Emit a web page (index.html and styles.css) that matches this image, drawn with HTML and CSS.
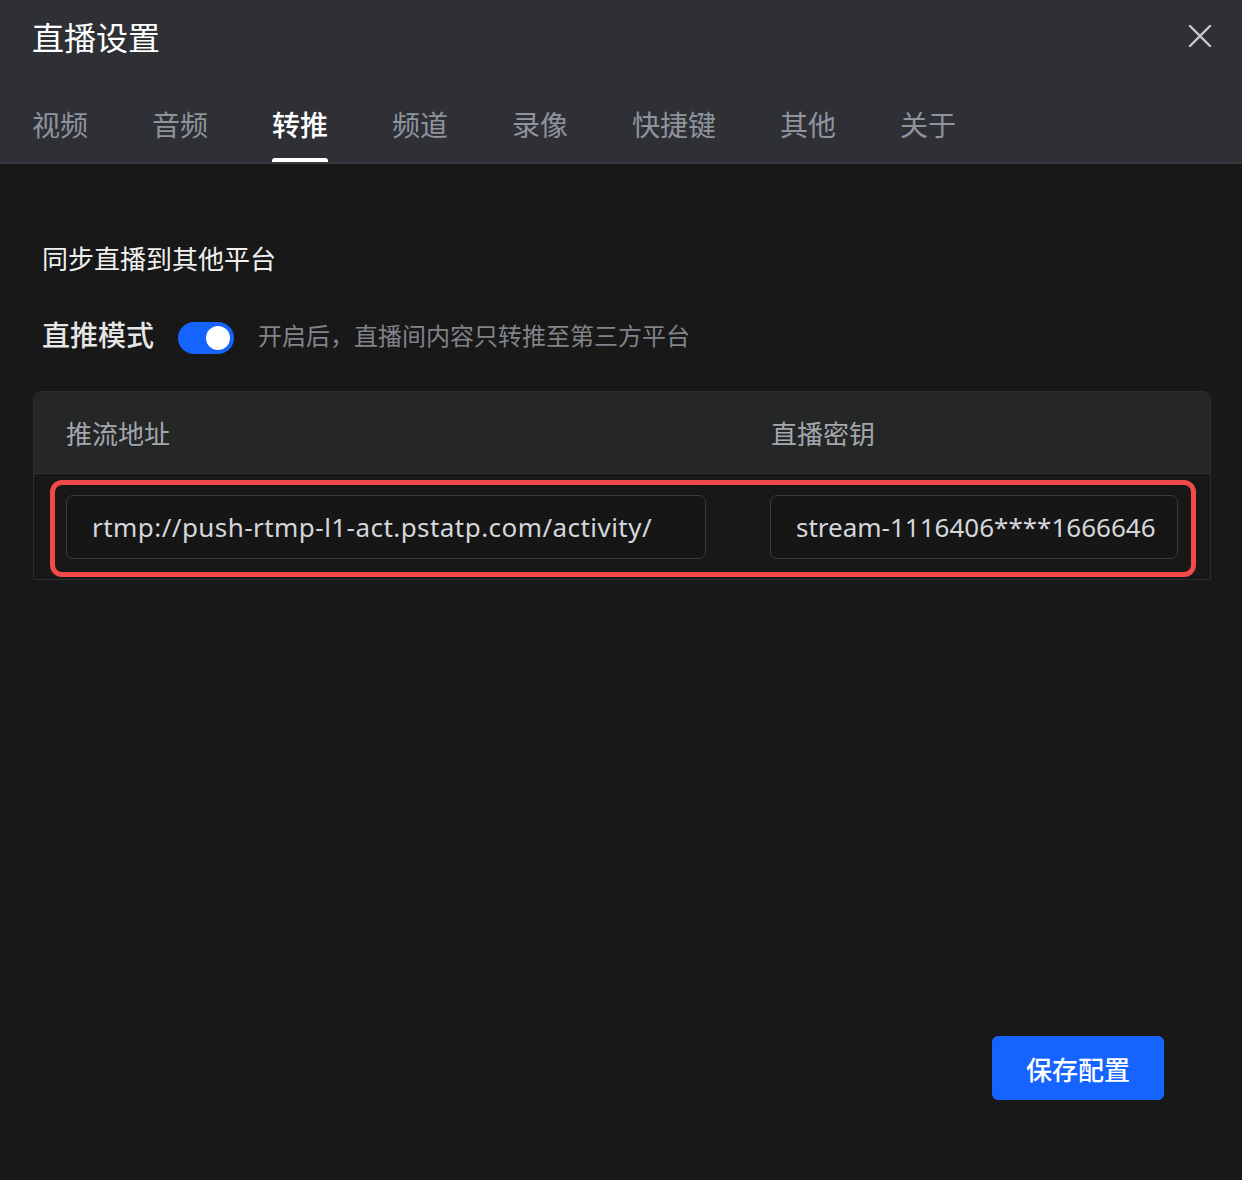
FILE: index.html
```html
<!DOCTYPE html>
<html lang="zh">
<head>
<meta charset="utf-8">
<link rel="stylesheet" href="styles.css">
</head>
<body>
<div class="dialog">
  <header class="header">
    <div class="title-row">
      <h1 class="title">直播设置</h1>
      <button class="close" aria-label="关闭">
        <svg width="24" height="24" viewBox="0 0 24 24"><path d="M2 2L22 22M22 2L2 22" stroke="#c9ccd2" stroke-width="2.4" stroke-linecap="round" fill="none"/></svg>
      </button>
    </div>
    <nav class="tabs">
      <span class="tab">视频</span>
      <span class="tab">音频</span>
      <span class="tab active">转推</span>
      <span class="tab">频道</span>
      <span class="tab">录像</span>
      <span class="tab">快捷键</span>
      <span class="tab">其他</span>
      <span class="tab">关于</span>
    </nav>
  </header>
  <main class="content">
    <h2 class="section-title">同步直播到其他平台</h2>
    <div class="mode-row">
      <span class="mode-label">直推模式</span>
      <span class="switch"><span class="knob"></span></span>
      <span class="mode-desc">开启后，直播间内容只转推至第三方平台</span>
    </div>
    <div class="table">
      <div class="thead">
        <div class="col col-url">推流地址</div>
        <div class="col col-key">直播密钥</div>
      </div>
      <div class="tbody">
        <div class="highlight"></div>
        <div class="col col-url"><div class="input input-url">rtmp://push-rtmp-l1-act.pstatp.com/activity/</div></div>
        <div class="col col-key"><div class="input">stream-1116406****1666646</div></div>
      </div>
    </div>
    <div class="actions">
      <button class="save">保存配置</button>
    </div>
  </main>
</div>
</body>
</html>
```

FILE: styles.css
```css
* { box-sizing: border-box; }
html, body { margin: 0; padding: 0; }
body {
  background: #181818;
  font-family: "Noto Sans", "Noto Sans CJK SC", sans-serif;
  width: 1242px;
  height: 1180px;
  overflow: hidden;
}
.dialog { display: flex; flex-direction: column; height: 1180px; }
.header {
  background: #2e3036;
  border-bottom: 2px solid #3a3c42;
  height: 164px;
  padding: 0 30px 0 32px;
  display: flex;
  flex-direction: column;
}
.title-row {
  display: flex;
  align-items: center;
  justify-content: space-between;
  height: 76px;
}
.title {
  margin: 0;
  font-family: "Noto Sans CJK SC", sans-serif;
  font-weight: 400;
  font-size: 32px;
  color: #ffffff;
  line-height: 1;
  position: relative;
  top: -2px;
}
.close {
  background: none;
  border: 0;
  padding: 0;
  width: 24px;
  height: 24px;
  display: flex;
  position: relative;
  top: -2px;
}
.tabs {
  display: flex;
  gap: 64px;
  margin-top: 14px;
}
.tab {
  font-family: "Noto Sans CJK SC", sans-serif;
  font-size: 28px;
  line-height: 40px;
  color: #8e939c;
  height: 72px;
  padding-top: 14px;
  position: relative;
}
.tab.active { color: #ffffff; font-weight: 500; }
.tab.active::after {
  content: "";
  position: absolute;
  left: 0; right: 0; bottom: 0;
  height: 4px;
  background: #ffffff;
  border-radius: 3px 3px 0 0;
}
.content {
  flex: 1;
  padding: 0 31px 0 33px;
  display: flex;
  flex-direction: column;
}
.section-title {
  margin: 76px 0 0 9px;
  font-family: "Noto Sans CJK SC", sans-serif;
  font-size: 26px;
  font-weight: 400;
  line-height: 36px;
  color: #f0f0f0;
}
.mode-row {
  display: flex;
  align-items: center;
  margin: 38px 0 0 9px;
  height: 40px;
}
.mode-label {
  font-family: "Noto Sans CJK SC", sans-serif;
  font-size: 28px;
  font-weight: 500;
  color: #e6e6e6;
}
.switch {
  width: 56px;
  height: 32px;
  border-radius: 16px;
  background: #1664ff;
  margin-left: 24px;
  margin-top: 7px;
  display: flex;
  align-items: center;
  justify-content: flex-end;
  padding-right: 4px;
}
.knob { width: 24px; height: 24px; border-radius: 50%; background: #ffffff; }
.mode-desc {
  margin-left: 24px;
  font-family: "Noto Sans CJK SC", sans-serif;
  font-size: 24px;
  color: #80848a;
}
.table {
  margin-top: 37px;
  border: 1px solid #2c2d2f;
  border-radius: 8px 8px 0 0;
  overflow: hidden;
}
.thead {
  display: flex;
  height: 82px;
  align-items: center;
  background: #252626;
  border-bottom: 1px solid #303133;
}
.thead .col {
  font-family: "Noto Sans CJK SC", sans-serif;
  font-size: 26px;
  color: #a3a7ae;
}
.col-url { width: 737px; padding-left: 32px; }
.col-key { flex: 1; padding-left: 0; padding-right: 32px; }
.tbody {
  display: flex;
  align-items: center;
  height: 105px;
  background: #181818;
  position: relative;
}
.highlight {
  position: absolute;
  left: 16px;
  top: 6px;
  width: 1146px;
  height: 97px;
  border: 5px solid #f24a4a;
  border-radius: 12px;
  pointer-events: none;
}
.tbody .col-url { padding-right: 32px; }
.input {
  height: 64px;
  border: 1.5px solid #3a3b3d;
  border-radius: 7px;
  background: #161616;
  display: flex;
  align-items: center;
  padding-left: 25px;
  font-family: "Noto Sans", "Noto Sans CJK SC", sans-serif;
  font-size: 26px;
  color: #d4d7dc;
  white-space: nowrap;
  overflow: hidden;
}
.input-url { letter-spacing: 0.45px; }
.tbody .col-url .input { width: 640px; }
.tbody .col-key .input { width: 408px; }
.actions {
  display: flex;
  justify-content: flex-end;
  margin-top: auto;
  margin-bottom: 80px;
  padding-right: 47px;
}
.save {
  width: 172px;
  height: 64px;
  border: 0;
  border-radius: 6px;
  background: #1664ff;
  color: #ffffff;
  font-family: "Noto Sans CJK SC", sans-serif;
  font-size: 26px;
  font-weight: 500;
}
```
